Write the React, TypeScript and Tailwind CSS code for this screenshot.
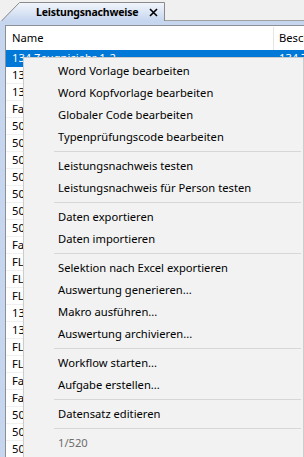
import React from "react";

const rows: string[] = [
  "13 Zeugnis Jahr 1",
  "13 Zeugnis Jahr 2",
  "Fachprüfung Elektro",
  "50 Lernkontrolle 1",
  "50 Lernkontrolle 2",
  "50 Lernkontrolle 3",
  "50 Lernkontrolle 4",
  "50 Lernkontrolle 5",
  "50 Lernkontrolle 6",
  "50 Lernkontrolle 7",
  "Fachgespräch",
  "FL Praxisauftrag 1",
  "FL Praxisauftrag 2",
  "FL Praxisauftrag 3",
  "13 Zeugnis Jahr 3",
  "13 Zeugnis Jahr 4",
  "FL Praxisauftrag 4",
  "FL Praxisauftrag 5",
  "Fachbericht 1",
  "Fachbericht 2",
  "50 Lernkontrolle 8",
  "50 Lernkontrolle 9",
  "50 Lernkontrolle 10",
];

type Entry = { label: string; disabled?: boolean } | "sep";

const menu: Entry[] = [
  { label: "Word Vorlage bearbeiten" },
  { label: "Word Kopfvorlage bearbeiten" },
  { label: "Globaler Code bearbeiten" },
  { label: "Typenprüfungscode bearbeiten" },
  "sep",
  { label: "Leistungsnachweis testen" },
  { label: "Leistungsnachweis für Person testen" },
  "sep",
  { label: "Daten exportieren" },
  { label: "Daten importieren" },
  "sep",
  { label: "Selektion nach Excel exportieren" },
  { label: "Auswertung generieren..." },
  { label: "Makro ausführen..." },
  { label: "Auswertung archivieren..." },
  "sep",
  { label: "Workflow starten..." },
  { label: "Aufgabe erstellen..." },
  "sep",
  { label: "Datensatz editieren" },
  "sep",
  { label: "1/520", disabled: true },
];

export default function App() {
  return (
    <div className="relative w-[304px] h-[457px] overflow-hidden bg-[#f0f0f0] font-['Noto_Sans',sans-serif] text-[11.2px] text-black flex flex-col">
      {/* Tab strip */}
      <div className="h-[21px] flex items-end shrink-0">
        <div className="relative w-[164px] h-[19px] ml-[1px] shrink-0">
          <div className="absolute inset-0 [clip-path:polygon(18px_0,100%_0,100%_100%,0_100%)] bg-gradient-to-b from-[#f4f7fc] to-[#c6d6ef]" />
          <svg className="absolute inset-0" width="164" height="19" viewBox="0 0 164 19">
            <path d="M0.5 19 L18.5 0.5 L163.5 0.5 L163.5 19" fill="none" stroke="#8a8a8a" strokeWidth="1" />
          </svg>
          <div className="relative h-full flex items-center pl-[35px] pt-[1px]">
            <span className="font-bold text-[10.5px] tracking-[-0.2px] leading-none whitespace-nowrap">Leistungsnachweise</span>
            <svg className="ml-[11px] shrink-0" width="9" height="9" viewBox="0 0 9 9">
              <path d="M1 1 L8 8 M8 1 L1 8" stroke="#000" strokeWidth="1.6" />
            </svg>
          </div>
        </div>
        <div className="flex-1 h-[1px] bg-[#a0a0a0]" />
      </div>

      {/* Tab page with blue frame */}
      <div className="flex-1 bg-[#c6d6ef] pl-[5px] pt-[4px] flex flex-col min-h-0">
        <div className="flex-1 bg-white border-l border-t border-[#8c8f96] flex flex-col min-h-0 overflow-hidden">
          {/* Header */}
          <div className="h-[24px] flex items-center shrink-0 pt-[1px]">
            <div className="w-[267px] shrink-0 pl-[6px] h-full flex items-center">Name</div>
            <div className="w-px shrink-0 h-full bg-[#e5e5e5]" />
            <div className="pl-[5px] h-full flex items-center whitespace-nowrap">Beschreibung</div>
          </div>
          {/* Selected row */}
          <div className="h-[17px] flex items-center bg-[#0078d7] text-white shrink-0">
            <div className="w-[267px] shrink-0 pl-[6px] whitespace-nowrap overflow-hidden">134 Zeugnisjahr 1-2</div>
            <div className="w-px shrink-0 h-full bg-[#0078d7]" />
            <div className="pl-[5px] whitespace-nowrap">134 Zeugnis</div>
          </div>
          {rows.map((r, i) => (
            <div key={i} className="h-[17px] flex items-center border-b border-[#f0f0f0] shrink-0">
              <div className="w-[267px] shrink-0 pl-[6px] whitespace-nowrap overflow-hidden">{r}</div>
            </div>
          ))}
        </div>
      </div>

      {/* Context menu */}
      <div className="absolute left-[23px] top-[57px] w-[281px] h-[401px] bg-[#f2f2f2] border border-[#cccccc] py-[2px] shadow-[2px_2px_3px_rgba(0,0,0,0.25)]">
        {menu.map((m, i) =>
          m === "sep" ? (
            <div key={i} className="h-[7px] flex items-center pl-[30px] pr-[2px]">
              <div className="h-px w-full bg-[#d7d7d7]" />
            </div>
          ) : (
            <div
              key={i}
              className={
                "h-[22px] flex items-center pl-[34px] whitespace-nowrap " +
                (m.disabled ? "text-[#6d6d6d]" : "text-black")
              }
            >
              {m.label}
            </div>
          )
        )}
      </div>
    </div>
  );
}
